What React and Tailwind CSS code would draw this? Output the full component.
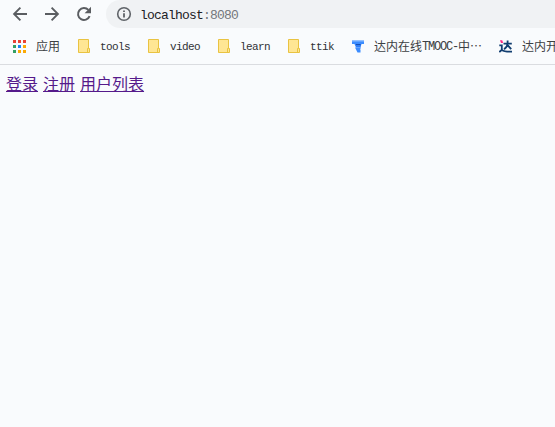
import React from "react";

const APP_COLORS = [
  "#ea4335", "#ea4335", "#ea4335",
  "#34a065", "#1a85f5", "#fbaa05",
  "#34a065", "#fbaa05", "#fbaa05",
];

function Arrow({ flip }) {
  return (
    <svg width="16" height="16" viewBox="0 0 16 16" fill="none" stroke="#5a5d61" strokeWidth="1.9" className={flip ? "rotate-180" : ""}>
      <path d="M15 8H2.5M8.4 1.7L2.1 8l6.3 6.3" />
    </svg>
  );
}

function Reload() {
  return (
    <svg width="16" height="16" viewBox="0 0 16 16">
      <path d="M13.6 10.2A6 6 0 1 1 12.4 3.9" fill="none" stroke="#5a5d61" strokeWidth="2" />
      <path d="M15 .8v6.4H8.6z" fill="#5a5d61" />
    </svg>
  );
}

function Info() {
  return (
    <svg width="16" height="16" viewBox="0 0 16 16">
      <circle cx="8" cy="8" r="6.3" fill="none" stroke="#5f6368" strokeWidth="1.6" />
      <path d="M8 7.2v4.3M8 4.4v1.6" stroke="#5f6368" strokeWidth="1.8" />
    </svg>
  );
}

function Folder() {
  return (
    <svg width="12" height="14" viewBox="0 0 12 14">
      <path d="M.5.5h10v9h1v4H.5z" fill="#ffe694" stroke="#e9c341" />
      <path d="M9.5 13V9.5h1" fill="none" stroke="#e9c341" />
    </svg>
  );
}

function FolderLink({ name }) {
  return (
    <div className="flex w-[70px] shrink-0 items-center gap-[10px]">
      <Folder />
      <span className="pt-[2px] font-['Liberation_Mono',monospace] text-[11px] leading-[14px] tracking-[-0.6px] text-[#303236]">
        {name}
      </span>
    </div>
  );
}

function Cjk({ children }) {
  return (
    <span className="font-['Noto_Sans_CJK_SC',sans-serif] text-[12px] leading-[14px] font-normal text-[#3c4043]">
      {children}
    </span>
  );
}

function TmoocIcon() {
  return (
    <svg width="12" height="13" viewBox="0 0 12 13">
      <path d="M0 .5h12v3.5H0z" fill="#3b8cff" />
      <path d="M0 .5h12v1H0z" fill="#8dbcff" />
      <path d="M2.5 4h7L8.5 7.5H4z" fill="#2f7df6" />
      <path d="M4 4h4.5v1H4zM5 8h3v1H5z" fill="#164fb0" />
      <path d="M3 7.5h6L8 9.5H4zM4 9.5h4.5V12.5H5.5z" fill="#3b8cff" />
    </svg>
  );
}

function DaIcon() {
  return (
    <svg width="13" height="13" viewBox="0 0 13 13" fill="none">
      <path d="M4.5 3.6h8.3M8.6.5v3Q8.3 7.3 5 9.2M8.8 5.3l3.4 3.9M.3 5.3h2.5v5M.3 12L3 9.8Q5 11.8 13 11.6" stroke="#123e70" strokeWidth="1.8" />
      <path d="M1 .3h2.2l1 2.6H2z" fill="#ff2a83" />
    </svg>
  );
}

export default function App() {
  return (
    <div className="h-[427px] w-[555px] overflow-hidden bg-[#f9fbfd]">
      <header className="h-[65px] border-b border-[#dadce0]">
        <div className="flex h-7 items-center pl-3">
          <nav className="flex w-[94px] gap-4">
            <Arrow />
            <Arrow flip />
            <Reload />
          </nav>
          <div className="flex h-7 flex-1 items-center gap-2 rounded-l-[14px] bg-[#f0f2f4] pl-[10px]">
            <Info />
            <span className="pt-[3px] font-['Liberation_Mono',monospace] text-[13px] leading-4 tracking-[-0.8px] text-[#202124]">
              localhost<span className="text-[#74777b]">:8080</span>
            </span>
          </div>
        </div>
        <div className="flex h-9 items-center pl-[13px] whitespace-nowrap">
          <div className="flex w-[65px] shrink-0 items-center gap-[10px]">
            <div className="grid grid-cols-[3px_3px_3px] gap-[2px]">
              {APP_COLORS.map((color, i) => (
                <i key={i} className="h-[3px] w-[3px]" style={{ background: color }} />
              ))}
            </div>
            <Cjk>应用</Cjk>
          </div>
          <FolderLink name="tools" />
          <FolderLink name="video" />
          <FolderLink name="learn" />
          <FolderLink name="ttik" />
          <div className="-ml-[6px] flex w-[147px] shrink-0 items-center gap-[10px]">
            <TmoocIcon />
            <span className="flex items-center">
              <Cjk>达内在线</Cjk>
              <span className="pt-[2px] font-['Liberation_Mono',monospace] text-[12px] leading-[14px] tracking-[-1.2px] text-[#3c4043]">
                TMOOC-
              </span>
              <Cjk>中…</Cjk>
            </span>
          </div>
          <div className="flex shrink-0 items-center gap-[10px]">
            <DaIcon />
            <Cjk>达内开</Cjk>
          </div>
        </div>
      </header>
      <main className="flex gap-[5px] pt-[8px] pl-[6px] font-['Noto_Sans_CJK_SC',sans-serif] text-[16px] leading-5 font-normal text-[#551a8b]">
        <a href="#login" className="underline decoration-1 underline-offset-1 [text-decoration-skip-ink:none]">登录</a>
        <a href="#register" className="underline decoration-1 underline-offset-1 [text-decoration-skip-ink:none]">注册</a>
        <a href="#users" className="underline decoration-1 underline-offset-1 [text-decoration-skip-ink:none]">用户列表</a>
      </main>
    </div>
  );
}
